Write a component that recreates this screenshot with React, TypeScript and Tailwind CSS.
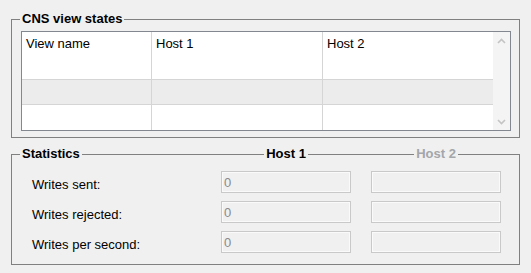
import React from "react";

function Chevron({ dir }: { dir: "up" | "down" }) {
  return (
    <svg width="9" height="6" viewBox="0 0 9 6" className="block">
      {dir === "up" ? (
        <path d="M1 5 L4.5 1.5 L8 5" fill="none" stroke="#c4c4c4" strokeWidth="1.6" />
      ) : (
        <path d="M1 1 L4.5 4.5 L8 1" fill="none" stroke="#c4c4c4" strokeWidth="1.6" />
      )}
    </svg>
  );
}

function Field({ value }: { value?: string }) {
  return (
    <div className="h-[22px] border border-[#c9c9c9] bg-[#f0f0f0] shadow-[inset_0_0_0_1px_#fafafa] flex items-center pl-[2px] text-[#8a8a8a]">
      {value}
    </div>
  );
}

export default function App() {
  const rows = [
    { label: "Writes sent:" },
    { label: "Writes rejected:" },
    { label: "Writes per second:" },
  ];
  return (
    <div className="w-[531px] h-[273px] bg-[#f0f0f0] pt-[19px] px-[11px] font-['Liberation_Sans',Arial,sans-serif] text-[13px] leading-[15px] text-black">
      {/* CNS view states group */}
      <div className="relative w-[509px] h-[119px] border border-[#808080] pt-[11px] pl-[9px] pr-[8px]">
        <div className="absolute left-[8px] top-[-9px] px-[2px] bg-[#f0f0f0] font-bold">CNS view states</div>
        <div className="h-[100px] border border-[#828790] bg-white flex">
          <div className="flex-1 flex flex-col">
            <div className="h-[48px] flex border-b border-[#d5d5d5]">
              <div className="w-[130px] border-r border-[#d5d5d5] pl-[4px] pt-[4px]">View name</div>
              <div className="w-[171px] border-r border-[#d5d5d5] pl-[4px] pt-[4px]">Host 1</div>
              <div className="flex-1 pl-[4px] pt-[4px]">Host 2</div>
            </div>
            <div className="h-[25px] flex border-b border-[#d5d5d5] bg-[#ececec]">
              <div className="w-[130px] border-r border-[#d5d5d5]"></div>
              <div className="w-[171px] border-r border-[#d5d5d5]"></div>
              <div className="flex-1"></div>
            </div>
            <div className="h-[25px] flex">
              <div className="w-[130px] border-r border-[#d5d5d5]"></div>
              <div className="w-[171px] border-r border-[#d5d5d5]"></div>
              <div className="flex-1"></div>
            </div>
          </div>
          <div className="w-[17px] bg-[#f4f4f4] flex flex-col justify-between">
            <div className="h-[17px] flex items-center justify-center">
              <Chevron dir="up" />
            </div>
            <div className="h-[17px] flex items-center justify-center">
              <Chevron dir="down" />
            </div>
          </div>
        </div>
      </div>

      {/* Statistics group */}
      <div className="relative mt-[16px] w-[509px] h-[111px] border border-[#808080]">
        <div className="absolute left-0 right-0 top-[-9px] grid grid-cols-[189px_130px_130px] gap-x-[20px] font-bold">
          <div className="justify-self-start ml-[8px] px-[2px] bg-[#f0f0f0]">Statistics</div>
          <div className="justify-self-center px-[2px] bg-[#f0f0f0]">Host 1</div>
          <div className="justify-self-center px-[2px] bg-[#f0f0f0] text-[#a3a6aa]">Host 2</div>
        </div>
        <div className="pt-[16px] grid grid-cols-[189px_130px_130px] gap-x-[20px] gap-y-[8px]">
          {rows.map((r) => (
            <React.Fragment key={r.label}>
              <div className="pl-[20px] pt-[4px] flex items-center">{r.label}</div>
              <Field value="0" />
              <Field />
            </React.Fragment>
          ))}
        </div>
      </div>
    </div>
  );
}
